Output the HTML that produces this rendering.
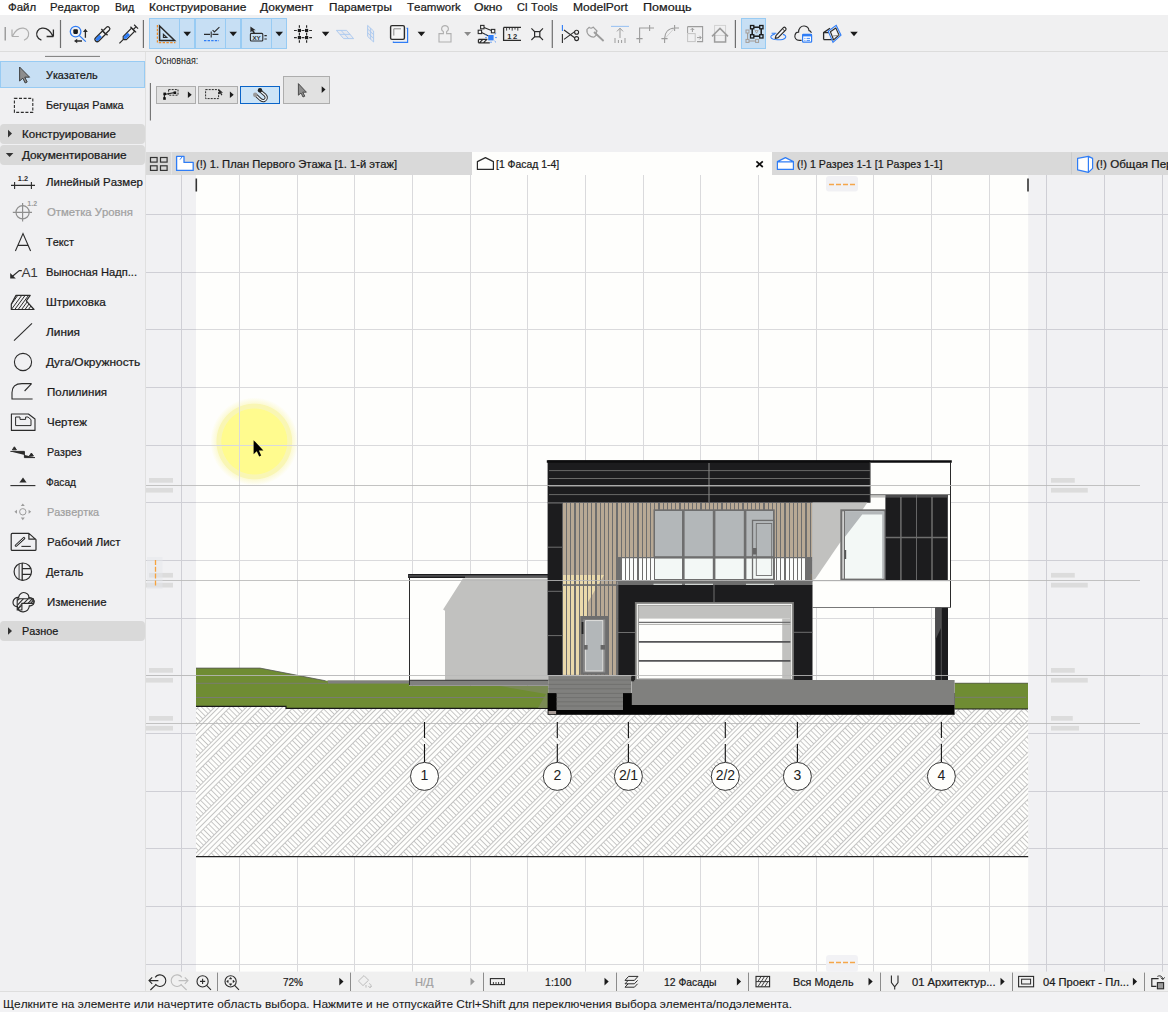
<!DOCTYPE html><html lang="ru"><head><meta charset="utf-8"><title>ARCHICAD</title><style>
html,body{margin:0;padding:0;}
body{width:1168px;height:1012px;position:relative;overflow:hidden;background:#f0f0f2;font-family:"Liberation Sans", "DejaVu Sans", sans-serif;}
.abs{position:absolute;}
.t{position:absolute;white-space:nowrap;line-height:1;font-kerning:none;transform-origin:0 0;-webkit-text-stroke:0.22px currentColor;}
#menubar{left:0;top:0;width:1168px;height:15px;background:#ffffff;}
#toolbar{left:0;top:15px;width:1168px;height:36px;background:#f0f0f1;border-bottom:1px solid #dcdcdc;}
#infobox{left:146px;top:52px;width:1022px;height:97px;background:#f0f0f2;}
#vdiv{left:145px;top:52px;width:1px;height:940px;background:#e0e0e0;}
#toolbox{left:0;top:52px;width:146px;height:942px;background:#f0f0f2;}
#tabbar{left:146px;top:152px;width:1022px;height:22.8px;background:#d9d9d9;}
#tabactive{left:471.6px;top:152px;width:300px;height:23px;background:#fefefc;}
#bottombar{left:146px;top:971.8px;width:1022px;height:20px;background:#f0f0f0;}
#statusbar{left:0;top:991px;width:1168px;height:21px;background:#f2f2f4;border-top:1px solid #dedede;box-sizing:border-box;}
.bluebtn{background:#c7dff4;border:1px solid #98cbf3;box-sizing:border-box;}
.hdr{left:0;width:145px;background:#d9d9d9;border-radius:4px;}
.ibtn{background:#e1e1e1;border:1px solid #adadad;box-sizing:border-box;}
</style></head><body>
<svg id="cv" width="1168" height="1012" viewBox="0 0 1168 1012" style="position:absolute;left:0;top:0">
<defs>
<clipPath id="cvclip"><rect x="146" y="174.7" width="1022" height="797.0999999999999"/></clipPath>
<pattern id="hatch" patternUnits="userSpaceOnUse" width="3.7" height="22.48" patternTransform="rotate(-45) translate(0 -0.53)"><path d="M0 0H3.7M0 3.81H3.7M0 7.63H3.7M0 11.44H3.7M1 11.44V22.48" stroke="#b0b0b0" stroke-width="0.75" fill="none" shape-rendering="crispEdges"/></pattern>
<radialGradient id="ycur" cx="0.5" cy="0.5" r="0.5"><stop offset="0" stop-color="#fffb8e"/><stop offset="0.74" stop-color="#fffb8e"/><stop offset="0.76" stop-color="#f9f6b4"/><stop offset="0.85" stop-color="#f9f6b4"/><stop offset="0.87" stop-color="#fcfad6"/><stop offset="1" stop-color="#fefefc"/></radialGradient>
</defs>
<g clip-path="url(#cvclip)">
<rect x="146" y="174.7" width="1022" height="797.0999999999999" fill="#fefefc"/>
<circle cx="254.3" cy="441.5" r="44" fill="url(#ycur)"/>
<path d="M181.5 174.7V971.8M239.5 174.7V971.8M297.5 174.7V971.8M354.5 174.7V971.8M412.5 174.7V971.8M470.5 174.7V971.8M527.5 174.7V971.8M585.5 174.7V971.8M643.5 174.7V971.8M700.5 174.7V971.8M758.5 174.7V971.8M816.5 174.7V971.8M873.5 174.7V971.8M931.5 174.7V971.8M989.5 174.7V971.8M1046.5 174.7V971.8M1104.5 174.7V971.8M1162.5 174.7V971.8M146 214.5H1168M146 272.5H1168M146 329.5H1168M146 387.5H1168M146 445.5H1168M146 502.5H1168M146 560.5H1168M146 618.5H1168M146 675.5H1168M146 733.5H1168M146 791.5H1168M146 848.5H1168M146 906.5H1168M146 964.5H1168" stroke="#dadadc" stroke-width="1" fill="none"/>
<rect x="146" y="174.7" width="50" height="797.0999999999999" fill="rgba(37,37,102,0.06)"/>
<rect x="1028.2" y="174.7" width="139.79999999999995" height="797.0999999999999" fill="rgba(37,37,102,0.06)"/>
<path d="M145.5 174.7V971.8" stroke="#d0d0d0" stroke-width="1"/>
<rect x="196" y="706" width="832.2" height="150.6" fill="#fefefc"/>
<rect x="196" y="706" width="832.2" height="150.6" fill="url(#hatch)"/>
<path d="M196 856.6H1028.2" stroke="#222" stroke-width="1.2"/>
<path d="M196 668.1H260L325.6 680.8H409V686H548.3V708.6H286V706.6H196Z" fill="#6f8c33"/>
<path d="M196 668.1H260L325.6 680.8" stroke="#555" stroke-width="0.8" fill="none"/>
<rect x="327.7" y="680.4" width="81.5" height="3.2" fill="#80807e"/>
<rect x="409" y="680.4" width="139.5" height="5.4" fill="#80807e"/>
<path d="M196 683.3H327M196 697.5H548" stroke="#7a7a78" stroke-width="0.9"/>
<path d="M196 706.4H286V708.4H548" stroke="#1a1a1a" stroke-width="1.2" fill="none"/>
<path d="M500 686H548.3V708L538 708L546 694Z" fill="#7d8a5c" opacity="0.8"/>
<rect x="954.6" y="683" width="73.4" height="26" fill="#6f8c33"/>
<path d="M954.6 697.3H1026" stroke="#7a7a78" stroke-width="0.9"/>
<path d="M954.6 683.2H1028" stroke="#555" stroke-width="0.7"/>
<path d="M954.6 709H1028" stroke="#1a1a1a" stroke-width="1.2"/>
<rect x="409" y="577" width="139.3" height="103.4" fill="#fefefc"/>
<path d="M462.9 578.4H548.3V680.2H445V610.8L443.1 609.6Z" fill="#c1c1bf"/>
<rect x="408.1" y="574" width="140" height="4" fill="#1c1c1e"/><rect x="409" y="575" width="139" height="1.8" fill="#4a4a4c"/>
<path d="M465 577.2H548" stroke="#777" stroke-width="1.2"/>
<path d="M409.5 577V685" stroke="#2b2b2b" stroke-width="1"/>
<path d="M409 680.3H548.3" stroke="#2a2a2a" stroke-width="1"/>
<rect x="812.5" y="462" width="137.8" height="145.7" fill="#fefefc"/>
<rect x="547.6" y="460.3" width="322.6" height="42.4" fill="#1c1c1e"/>
<path d="M549 470.6H870M549 478.5H870M549 494.6H870" stroke="#7d7d7b" stroke-width="0.8"/>
<path d="M549 486H870" stroke="#a9a9a7" stroke-width="0.9"/>
<path d="M709 463V502.6" stroke="#8a8a88" stroke-width="1"/>
<path d="M546.8 461.5H951.8" stroke="#0c0c0e" stroke-width="2.6"/>
<rect x="562" y="502.6" width="250.5" height="79" fill="#6e6e6e"/>
<rect x="562" y="581" width="55.5" height="94" fill="#6e6e6e"/>
<path d="M563 503.4H566V581H563ZM567 503.4H570V581H567ZM571 503.4H574V581H571ZM576 503.4H579V581H576ZM580 503.4H583V581H580ZM584 503.4H587V581H584ZM588 503.4H591V581H588ZM592 503.4H595V581H592ZM597 503.4H600V581H597ZM601 503.4H604V581H601ZM605 503.4H608V581H605ZM609 503.4H612V581H609ZM613 503.4H616V581H613ZM618 503.4H621V581H618ZM622 503.4H625V581H622ZM626 503.4H629V581H626ZM630 503.4H633V581H630ZM634 503.4H637V581H634ZM639 503.4H642V581H639ZM643 503.4H646V581H643ZM647 503.4H650V581H647ZM651 503.4H654V581H651ZM655 503.4H658V581H655ZM660 503.4H663V581H660ZM664 503.4H667V581H664ZM668 503.4H671V581H668ZM672 503.4H675V581H672ZM676 503.4H679V581H676ZM681 503.4H684V581H681ZM685 503.4H688V581H685ZM689 503.4H692V581H689ZM693 503.4H696V581H693ZM697 503.4H700V581H697ZM702 503.4H705V581H702ZM706 503.4H709V581H706ZM710 503.4H713V581H710ZM714 503.4H717V581H714ZM718 503.4H721V581H718ZM723 503.4H726V581H723ZM727 503.4H730V581H727ZM731 503.4H734V581H731ZM735 503.4H738V581H735ZM739 503.4H742V581H739ZM744 503.4H747V581H744ZM748 503.4H751V581H748ZM752 503.4H755V581H752ZM756 503.4H759V581H756ZM760 503.4H763V581H760ZM765 503.4H768V581H765ZM769 503.4H772V581H769ZM773 503.4H776V581H773ZM777 503.4H780V581H777ZM781 503.4H784V581H781ZM786 503.4H789V581H786ZM790 503.4H793V581H790ZM794 503.4H797V581H794ZM798 503.4H801V581H798ZM802 503.4H805V581H802ZM807 503.4H810V581H807ZM811 503.4H812V581H811Z" fill="#b8a995" shape-rendering="crispEdges"/>
<path d="M563 581H566V675H563ZM567 581H570V675H567ZM571 581H574V675H571ZM576 581H579V675H576ZM580 581H583V675H580ZM584 581H587V675H584ZM588 581H591V675H588ZM592 581H595V675H592ZM597 581H600V675H597ZM601 581H604V675H601ZM605 581H608V675H605ZM609 581H612V675H609ZM613 581H616V675H613Z" fill="#b8a995" shape-rendering="crispEdges"/>
<clipPath id="crm"><path d="M562 575H604L587.2 603.4V616H580.3V674.8H562Z"/></clipPath>
<path d="M563 575H566V675H563ZM567 575H570V675H567ZM571 575H574V675H571ZM576 575H579V675H576ZM580 575H583V675H580ZM584 575H587V675H584ZM588 575H591V675H588ZM592 575H595V675H592ZM597 575H600V675H597ZM601 575H604V675H601ZM605 575H606V675H605Z" fill="#ead9ab" shape-rendering="crispEdges" clip-path="url(#crm)"/>
<rect x="547.6" y="502.6" width="14.6" height="172.5" fill="#1c1c1e"/>
<path d="M548 547.2H562M548 591.3H562M548 635.6H562M548 503H562" stroke="#6e6e6e" stroke-width="1"/>
<rect x="653.5" y="509.3" width="121.2" height="71" fill="#6e6e6e"/>
<rect x="655" y="511" width="27" height="45.2" fill="#b3b7b9"/>
<rect x="655" y="558.4" width="27" height="20.6" fill="#f3f8f6"/>
<rect x="684.6" y="511" width="28.199999999999932" height="45.2" fill="#b3b7b9"/>
<rect x="684.6" y="558.4" width="28.199999999999932" height="20.6" fill="#f3f8f6"/>
<rect x="715.4" y="511" width="28.399999999999977" height="45.2" fill="#b3b7b9"/>
<rect x="715.4" y="558.4" width="28.399999999999977" height="20.6" fill="#f3f8f6"/>
<rect x="746.4" y="511" width="26.600000000000023" height="45.2" fill="#b3b7b9"/>
<rect x="746.4" y="558.4" width="26.600000000000023" height="20.6" fill="#f3f8f6"/>
<rect x="752.5" y="520.4" width="21.3" height="59" fill="none" stroke="#6e6e6e" stroke-width="1.3"/>
<rect x="756.3" y="523.5" width="15.4" height="52" fill="none" stroke="#6e6e6e" stroke-width="0.9"/>
<rect x="753" y="548" width="3.6" height="6.5" fill="#666"/>
<rect x="618.3" y="557.2" width="35.4" height="24" fill="#6e6e6e"/>
<rect x="774.6" y="557.2" width="37.2" height="24" fill="#6e6e6e"/>
<path d="M622 558H625V580.4H622ZM626 558H629V580.4H626ZM630 558H633V580.4H630ZM634 558H637V580.4H634ZM639 558H642V580.4H639ZM643 558H646V580.4H643ZM647 558H650V580.4H647ZM651 558H654V580.4H651Z" fill="#fbfcfb" shape-rendering="crispEdges"/>
<path d="M775 558H776V580.4H775ZM777 558H780V580.4H777ZM781 558H784V580.4H781ZM786 558H789V580.4H786ZM790 558H793V580.4H790ZM794 558H797V580.4H794ZM798 558H801V580.4H798ZM802 558H805V580.4H802Z" fill="#fbfcfb" shape-rendering="crispEdges"/>
<rect x="807.6" y="557" width="4.6" height="24" fill="#6e6e6e"/>
<rect x="617.6" y="557" width="3.6" height="24" fill="#6e6e6e"/>
<path d="M811.4 574V584" stroke="#e8a33d" stroke-width="0.8"/>
<path d="M618 557.6H812" stroke="#6e6e6e" stroke-width="1.4"/>
<path d="M618.6 557V582M811.2 557V582" stroke="#6e6e6e" stroke-width="1.3"/>
<rect x="617.5" y="580.2" width="195" height="5" fill="#6e6e6e"/>
<path d="M653.5 584.3H682M685 584.3H713M746 584.3H774" stroke="#e9eeec" stroke-width="1"/>
<rect x="562" y="584.2" width="55.5" height="1.7" fill="#6e6e6e"/>
<rect x="617.5" y="585" width="195" height="95.2" fill="#1c1c1e"/>
<path d="M714 585V602.6M617.5 632.5H635M793.6 632.3H812.5" stroke="#6e6e6e" stroke-width="1"/>
<path d="M617.9 585V675" stroke="#6e6e6e" stroke-width="1"/>
<rect x="634.9" y="602" width="159" height="78" fill="#7a7a78"/>
<rect x="636.7" y="603.8" width="155.4" height="75.4" fill="#f4f4f2"/>
<rect x="637.9" y="605" width="153.2" height="73.6" fill="#8a8a88"/>
<rect x="638.8" y="605.8" width="151.6" height="72.4" fill="#fefefc"/>
<rect x="638.8" y="605.8" width="151.6" height="12.8" fill="#c1c1bf"/>
<rect x="782.2" y="618.6" width="8.2" height="59.6" fill="#c1c1bf"/>
<path d="M638.8 622.4H790.4" stroke="#6e6e6e" stroke-width="1.1"/><path d="M638.8 624.4H790.4" stroke="#9a9a98" stroke-width="0.8"/>
<path d="M638.8 641.8H790.4M638.8 660.8H790.4" stroke="#555557" stroke-width="1.8"/>
<rect x="580.3" y="616" width="27.8" height="58.8" fill="#6e6e6e"/>
<rect x="583.2" y="619.4" width="22" height="53" fill="#8c8c8c"/>
<rect x="585.6" y="620.6" width="17.2" height="50.4" fill="#b3b7b9" stroke="#e4e4e2" stroke-width="0.9"/>
<rect x="581.6" y="622" width="1.8" height="12" fill="#222"/>
<rect x="584" y="645" width="3.6" height="4.6" fill="#666"/><rect x="600.6" y="645" width="4.4" height="4.6" fill="#666"/>
<path d="M812.5 502.6H867.4L815.2 579L812.5 580Z" fill="#c1c1bf"/>
<rect x="840.3" y="509.3" width="45.3" height="71" fill="#6e6e6e"/>
<rect x="845" y="511.3" width="38.4" height="67.3" fill="#f3f8f6"/>
<path d="M845 511.3H883.4V514.6H862.2L845 536.8Z" fill="#b3b7b9"/>
<rect x="882.2" y="511.3" width="2.2" height="67.3" fill="#b3b7b9"/>
<rect x="842.4" y="511.3" width="1.4" height="67.3" fill="#e8e8e6"/>
<rect x="844.4" y="550" width="1.8" height="9" fill="#555"/>
<rect x="885.4" y="495" width="62.4" height="85" fill="#1c1c1e"/>
<rect x="885.4" y="495" width="62.4" height="2.6" fill="#4c4c4e"/>
<rect x="870.4" y="495" width="15" height="2.6" fill="#c1c1bf"/>
<path d="M900.9 497V580M932 497V580M885.4 537.4H947.8" stroke="#6e6e6e" stroke-width="1.5"/>
<path d="M916.5 495V580" stroke="#6e6e6e" stroke-width="0.9"/>
<path d="M870 494.6H950M812.5 580.6H950.3M812.5 607.5H950.3" stroke="#555" stroke-width="0.8"/>
<path d="M950.5 462V607.6" stroke="#2a2a2a" stroke-width="1"/>
<path d="M870.2 462V502.6" stroke="#555" stroke-width="0.8"/>
<rect x="935.3" y="607.7" width="12.7" height="72.5" fill="#1c1c1e"/>
<path d="M935.3 607.7H941V628L935.3 640Z" fill="#4c4c4e"/>
<path d="M941.3 607.7V680" stroke="#777" stroke-width="0.6"/>
<rect x="547.6" y="693" width="407" height="21.8" fill="#050505"/>
<rect x="548.3" y="675.3" width="83.2" height="17.8" fill="#80807e"/>
<rect x="556.6" y="693" width="66.4" height="17" fill="#80807e"/>
<path d="M548.3 675.6H631M548.3 680H631M548.3 684.4H631M548.3 688.8H631M556.6 693.4H623M556.6 697.6H623M556.6 701.8H623M556.6 706H623" stroke="#6a6a68" stroke-width="0.7"/>
<path d="M548.3 675.6H631" stroke="#c5c5c3" stroke-width="0.9"/>
<rect x="631.8" y="680" width="322.8" height="25" fill="#80807e"/>
<rect x="631.2" y="676.8" width="3" height="4.5" fill="#222"/>
<rect x="548.5" y="711" width="7.6" height="3" fill="#a59a95"/>
<path d="M146 485.5H1140M146 580.5H1140M146 675.5H1140M146 723.5H1140" stroke="#b9b9b9" stroke-width="1" opacity="0.85"/>
<path d="M424.5 722V738M424.5 744V762" stroke="#111" stroke-width="1.1"/>
<circle cx="424.5" cy="776.4" r="14" fill="#fefefc" stroke="#222" stroke-width="0.9"/>
<text x="424.5" y="780.2" text-anchor="middle" font-family="'Liberation Sans', sans-serif" font-size="14" fill="#222">1</text>
<path d="M557.3 722V738M557.3 744V762" stroke="#111" stroke-width="1.1"/>
<circle cx="557.3" cy="776.4" r="14" fill="#fefefc" stroke="#222" stroke-width="0.9"/>
<text x="557.3" y="780.2" text-anchor="middle" font-family="'Liberation Sans', sans-serif" font-size="14" fill="#222">2</text>
<path d="M628.4 722V738M628.4 744V762" stroke="#111" stroke-width="1.1"/>
<circle cx="628.4" cy="776.4" r="14" fill="#fefefc" stroke="#222" stroke-width="0.9"/>
<text x="628.4" y="780.2" text-anchor="middle" font-family="'Liberation Sans', sans-serif" font-size="14" fill="#222" letter-spacing="-0.2">2/1</text>
<path d="M725.3 722V738M725.3 744V762" stroke="#111" stroke-width="1.1"/>
<circle cx="725.3" cy="776.4" r="14" fill="#fefefc" stroke="#222" stroke-width="0.9"/>
<text x="725.3" y="780.2" text-anchor="middle" font-family="'Liberation Sans', sans-serif" font-size="14" fill="#222" letter-spacing="-0.2">2/2</text>
<path d="M797.4 722V738M797.4 744V762" stroke="#111" stroke-width="1.1"/>
<circle cx="797.4" cy="776.4" r="14" fill="#fefefc" stroke="#222" stroke-width="0.9"/>
<text x="797.4" y="780.2" text-anchor="middle" font-family="'Liberation Sans', sans-serif" font-size="14" fill="#222">3</text>
<path d="M941.4 722V738M941.4 744V762" stroke="#111" stroke-width="1.1"/>
<circle cx="941.4" cy="776.4" r="14" fill="#fefefc" stroke="#222" stroke-width="0.9"/>
<text x="941.4" y="780.2" text-anchor="middle" font-family="'Liberation Sans', sans-serif" font-size="14" fill="#222">4</text>
<rect x="149" y="478.0" width="24" height="4.7" fill="#dcdcdc"/><rect x="146" y="487.9" width="27" height="4.7" fill="#dcdcdc"/>
<rect x="1051" y="478.0" width="23.8" height="4.7" fill="#dcdcdc"/><rect x="1051" y="487.9" width="36.8" height="4.7" fill="#dcdcdc"/>
<rect x="149" y="572.9" width="24" height="4.7" fill="#dcdcdc"/><rect x="146" y="582.8" width="27" height="4.7" fill="#dcdcdc"/>
<rect x="1051" y="572.9" width="23.8" height="4.7" fill="#dcdcdc"/><rect x="1051" y="582.8" width="36.8" height="4.7" fill="#dcdcdc"/>
<rect x="149" y="668.0" width="24" height="4.7" fill="#dcdcdc"/><rect x="146" y="677.9" width="27" height="4.7" fill="#dcdcdc"/>
<rect x="1051" y="668.0" width="23.8" height="4.7" fill="#dcdcdc"/><rect x="1051" y="677.9" width="36.8" height="4.7" fill="#dcdcdc"/>
<rect x="149" y="716.0" width="24" height="4.7" fill="#dcdcdc"/><rect x="146" y="725.9" width="27" height="4.7" fill="#dcdcdc"/>
<rect x="1051" y="716.0" width="21.8" height="4.7" fill="#dcdcdc"/><rect x="1051" y="725.9" width="28" height="4.7" fill="#dcdcdc"/>
<rect x="147" y="557" width="15.6" height="32" fill="#e4e6ea" opacity="0.45"/>
<path d="M155.5 560V586" stroke="#f6a23c" stroke-width="1.3" stroke-dasharray="5 1.8"/>
<rect x="826" y="176" width="32" height="15.6" rx="3" fill="#f1f1f4"/>
<path d="M829 184.5H856" stroke="#f5a64a" stroke-width="1.3" stroke-dasharray="5 2"/>
<rect x="826" y="955" width="32" height="17" rx="3" fill="#f1f1f4" opacity="0.9"/>
<path d="M829 962.5H856" stroke="#f5a64a" stroke-width="1.3" stroke-dasharray="5 2"/>
<path d="M196.3 178.5V191.5M1028 178.5V191.5" stroke="#333" stroke-width="1.6"/>
<path d="M253.6 440.2V454.2L256.8 451.2L259.2 456.4L261.2 455.4L258.9 450.4H263.4Z" fill="#000"/>
</g>
</svg>
<div class="abs" id="menubar"></div><div class="abs" id="toolbar"></div><div class="abs" id="infobox"></div>
<div class="abs" id="toolbox"></div><div class="abs" id="vdiv"></div><div class="abs" id="tabbar"></div><div class="abs" id="tabactive"></div>
<div class="abs" id="bottombar"></div><div class="abs" id="statusbar"></div>
<div class="abs bluebtn" style="left:149px;top:18px;width:30.8px;height:30.8px"></div>
<div class="abs bluebtn" style="left:179.2px;top:18px;width:16.0px;height:30.8px"></div>
<div class="abs bluebtn" style="left:194.6px;top:18px;width:31.3px;height:30.8px"></div>
<div class="abs bluebtn" style="left:225.3px;top:18px;width:16.0px;height:30.8px"></div>
<div class="abs bluebtn" style="left:240.7px;top:18px;width:31.1px;height:30.8px"></div>
<div class="abs bluebtn" style="left:271.2px;top:18px;width:16.0px;height:30.8px"></div>
<div class="abs bluebtn" style="left:741.2px;top:18px;width:24.6px;height:30.8px"></div>
<div class="abs ibtn" style="left:156.3px;top:86.3px;width:39.5px;height:17.8px"></div>
<div class="abs ibtn" style="left:198.2px;top:86.3px;width:39.5px;height:17.8px"></div>
<div class="abs" style="left:240.2px;top:86.3px;width:39.8px;height:17.8px;background:#cce4f7;border:1.4px solid #0a64c8;box-sizing:border-box"></div>
<div class="abs ibtn" style="left:282.5px;top:76.2px;width:47.3px;height:27.9px"></div>
<div class="abs bluebtn" style="left:0;top:61px;width:145px;height:26.8px"></div>
<div class="abs hdr" style="top:123.8px;height:19.8px"></div>
<div class="abs hdr" style="top:145.4px;height:19.3px"></div>
<div class="abs hdr" style="top:621.3px;height:19.5px"></div>
<svg id="ic" width="1168" height="1012" viewBox="0 0 1168 1012" style="position:absolute;left:0;top:0;pointer-events:none" fill="none" stroke-linecap="butt">
<path d="M5.2 27V40.5" stroke="#8a8a8a" stroke-width="1.2"/>
<path d="M12 36.5H18.8M12 36.5V29.5M12.4 36.2C15 31 19 27.6 23.4 28.2C27.6 28.8 29.6 32.6 28.4 36C27.6 38.2 26 39.6 24 40.2" stroke="#aeaeae" stroke-width="1.2"/>
<path d="M53.4 36.5H46.6M53.4 36.5V29.5M53 36.2C50.4 31 46.4 27.6 42 28.2C37.8 28.8 35.8 32.6 37 36C37.8 38.2 39.4 39.6 41.4 40.2" stroke="#2b2b2b" stroke-width="1.3"/>
<path d="M60.5 20V48M143.4 20V48M552.3 20V48M735.4 20V48" stroke="#6f6f6f" stroke-width="1.2"/>
<circle cx="75.6" cy="31.6" r="5.3" stroke="#2f7df6" stroke-width="1.3"/><path d="M79.4 35.6L85.8 41.6" stroke="#2f7df6" stroke-width="1.3"/>
<rect x="73.3" y="29.3" width="4.6" height="4.6" rx="1.1" fill="#1a1a1a"/>
<path d="M85.4 31.4V37.8M76.6 41H82" stroke="#2b2b2b" stroke-width="1.3"/><path d="M83 32L85.4 28.8L87.8 32ZM77.2 38.8V43.2L74 41Z" fill="#2b2b2b"/>
<g transform="translate(102.6 34) rotate(45)"><path d="M-2.2 -2V7.6C-2.2 10.6 2.2 10.6 2.2 7.6V-2Z" fill="#f4f4f4" stroke="#2b2b2b" stroke-width="1.3"/><path d="M-1.6 2.6H1.6V7.6C1.6 9.8 -1.6 9.8 -1.6 7.6Z" fill="#2f7df6"/><path d="M-4.4 -2.6H4.4" stroke="#2b2b2b" stroke-width="1.4"/><path d="M-2 -3V-7.4C-2 -10 2 -10 2 -7.4V-3" stroke="#2b2b2b" stroke-width="1.3" fill="#f4f4f4"/></g>
<g transform="translate(128.6 34.2) rotate(45)"><path d="M-2.2 -6.4H2.2V5.4L0.6 7H-0.6L-2.2 5.4Z" fill="#f4f4f4" stroke="#2b2b2b" stroke-width="1.2"/><path d="M-1.6 -0.4H1.6V5L0.4 6.4H-0.4L-1.6 5Z" fill="#2f7df6"/><path d="M0 7V13M-4 -6.6H4M0 -6.6V-10.4M-2.8 -10.6H2.8" stroke="#2b2b2b" stroke-width="1.2"/></g>
<path d="M159.6 26V40.4H174.6Z" stroke="#2b2b2b" stroke-width="1.5"/><path d="M163.4 34.2V37.4H166.8Z" stroke="#2b2b2b" stroke-width="1.1"/>
<path d="M157.4 25V42.6H175.4" stroke="#f08a24" stroke-width="1.2" stroke-dasharray="2.4 1.4"/>
<path d="M183.4 31.8H191.0L187.2 36.2Z" fill="#1a1a1a"/>
<path d="M204 34.4H210M212.4 34.4H218.4M211.2 31.6V37.4M212.6 30.2L214.4 32L219.4 27.2" stroke="#2b2b2b" stroke-width="1.1"/>
<path d="M204 40.6H219" stroke="#2f7df6" stroke-width="1.2" stroke-dasharray="2.4 1.2"/>
<path d="M229.4 31.8H237.0L233.2 36.2Z" fill="#1a1a1a"/>
<path d="M250.4 26.4V32.4L252 31L253.6 33.4L255 32.6L253.4 30.2H255.8Z" fill="#2b2b2b"/>
<rect x="250.4" y="33.4" width="12.4" height="7.6" rx="1" stroke="#2b2b2b" stroke-width="1.1"/>
<text x="256.6" y="39.6" text-anchor="middle" font-family="'Liberation Sans', sans-serif" font-size="6.2" font-weight="bold" fill="#2b2b2b">XY</text>
<path d="M264.4 35.6H266.8M264.4 39H266.8" stroke="#2b2b2b" stroke-width="1.1"/>
<path d="M275.4 31.8H283.0L279.2 36.2Z" fill="#1a1a1a"/>
<path d="M294 30.5H296.8M301.6 30.5H304.4M309.2 30.5H312" stroke="#2b2b2b" stroke-width="1.2"/>
<path d="M294 37.6H296.8M301.6 37.6H304.4M309.2 37.6H312" stroke="#2b2b2b" stroke-width="1.2"/>
<path d="M299.4 25.2V27.8M299.4 32.8V35.4M299.4 40.2V42.8" stroke="#2b2b2b" stroke-width="1.2"/>
<path d="M306.6 25.2V27.8M306.6 32.8V35.4M306.6 40.2V42.8" stroke="#2b2b2b" stroke-width="1.2"/>
<rect x="297.79999999999995" y="28.9" width="3.2" height="3.2" fill="#1a1a1a"/>
<rect x="297.79999999999995" y="36.0" width="3.2" height="3.2" fill="#1a1a1a"/>
<rect x="305.0" y="28.9" width="3.2" height="3.2" fill="#1a1a1a"/>
<rect x="305.0" y="36.0" width="3.2" height="3.2" fill="#1a1a1a"/>
<path d="M321.8 31.8H329.4L325.6 36.2Z" fill="#1a1a1a"/>
<path d="M336.4 30.4H346.6L353.6 38.6H343.6ZM341 30.4L348.6 38.6M340 34.4H350.2" stroke="#a9c7ef" stroke-width="0.9" fill="#e7e9ee"/>
<path d="M367.6 25.4L373.6 31V42L367.6 36.4ZM370.6 28.2V39.2M367.6 29L373.6 34.6M367.6 32.8L373.6 38.4" stroke="#a9c7ef" stroke-width="0.9" fill="#e7e9ee"/>
<path d="M393.4 41.6V42.4H407.6V28.4H406.6" stroke="#2f7df6" stroke-width="1.2"/>
<rect x="390.6" y="25.6" width="13.8" height="13.8" rx="1.4" stroke="#2b2b2b" stroke-width="1.4" fill="#f6f6f6"/><path d="M393.8 35.6V28.8H401" stroke="#8a8a8a" stroke-width="1"/>
<path d="M417.6 31.8H425.2L421.4 36.2Z" fill="#1a1a1a"/>
<path d="M443.4 33.6V31.6C440.2 29.6 441.6 25.6 445 25.6C448.4 25.6 449.8 29.6 446.6 31.6V33.6H451V42H439V33.6Z" stroke="#b0b0b0" stroke-width="1.1"/>
<path d="M464.1 31.9H471.1L467.6 36.1Z" fill="#8a8a8a"/>
<path d="M484 27.6L491.4 30.6M481.6 32.6L488.6 36" stroke="#2b2b2b" stroke-width="1.1"/>
<rect x="480.6" y="25.4" width="3.4" height="3.4" stroke="#2b2b2b" stroke-width="1.1" fill="#f4f4f4"/>
<rect x="478.2" y="30.2" width="3.4" height="3.4" stroke="#2b2b2b" stroke-width="1.1" fill="#f4f4f4"/>
<rect x="491.4" y="29.4" width="3.4" height="3.4" stroke="#2b2b2b" stroke-width="1.1" fill="#f4f4f4"/>
<rect x="488.2" y="35" width="5.4" height="5.4" fill="#2f7df6"/>
<path d="M494.8 34.4L496.2 33.2M495.2 37.6H496.8M494.6 41L495.8 42.2M491 41.6V43M486.6 35.6L485.4 34.6M485.2 37.6H486.8" stroke="#2f7df6" stroke-width="0.9"/>
<path d="M478.4 39.4H487.4M478.4 42.8H489.8M478.4 39.4V42.8M479.6 42.6L482.6 39.6M483.6 42.6L486.6 39.6" stroke="#2b2b2b" stroke-width="1.2"/>
<path d="M503.6 27.4H521M503.6 27.4V40.4H521" stroke="#2b2b2b" stroke-width="1.3"/><path d="M506.6 27.4V30.6M509.4 27.4V29.6M512.2 27.4V30.6M515 27.4V29.6M517.8 27.4V30.6" stroke="#2b2b2b" stroke-width="0.9"/>
<text x="513" y="38.8" text-anchor="middle" font-family="'Liberation Sans', sans-serif" font-size="7.6" font-weight="bold" fill="#2b2b2b" letter-spacing="1.6">12</text>
<path d="M531.4 28.4L535 32M543 28.4L539.4 32M531.4 40L535 36.4M543 40L539.4 36.4" stroke="#2b2b2b" stroke-width="1.1"/><rect x="534.6" y="31.6" width="5.2" height="5.2" stroke="#2b2b2b" stroke-width="1.2"/>
<path d="M562.4 25V31" stroke="#2f7df6" stroke-width="1.1"/><path d="M562.4 34V43" stroke="#2b2b2b" stroke-width="1.1"/>
<path d="M564 30L575 38M564 39.4L575 31.4" stroke="#2b2b2b" stroke-width="1.1"/><circle cx="576.6" cy="32.2" r="2" stroke="#2b2b2b" stroke-width="1.1"/><circle cx="576.6" cy="38.6" r="2" stroke="#2b2b2b" stroke-width="1.1"/>
<g transform="translate(-3.4 0)"><path d="M590.4 29.4L592.6 27.4C594 28.6 595.6 28.4 596.6 27.2L600.4 31C599 32.4 599.2 33.6 600.2 34.8L597.6 37C594 37.4 589.6 34.6 590.4 29.4Z" stroke="#9c9c9c" stroke-width="1.2"/><path d="M597.4 32L607 41" stroke="#9c9c9c" stroke-width="1.8"/></g>
<path d="M611 26.4H629" stroke="#9cc3f2" stroke-width="1.1"/><path d="M620 28.4V38M617 31.4L620 28.2L623 31.4M615 38V43M618.4 40V43M621.6 40V43M625 38V43" stroke="#9c9c9c" stroke-width="1"/>
<path d="M639.6 43V28H654M636.4 38.6H642.6M649.6 25V31" stroke="#9c9c9c" stroke-width="1.1"/>
<path d="M664.6 43V38.6C664.6 33 668 28.4 675 28M661.4 38.6H667.6M674.6 25V31M674.6 28H679" stroke="#9c9c9c" stroke-width="1.1"/><path d="M665.4 38L674 28.6" stroke="#c8c8c8" stroke-width="0.8"/>
<path d="M687.6 26.6H702.6V41.6H697" stroke="#9c9c9c" stroke-width="1.1"/><rect x="687.6" y="33.6" width="7.6" height="8" stroke="#c4c4c4" stroke-width="1"/><path d="M687.6 26.6V33M692.4 28.4V32M690.6 30L692.4 28.2L694.2 30M697 37.6H701M699.4 35.8L701.2 37.6L699.4 39.4" stroke="#9c9c9c" stroke-width="1"/>
<rect x="714.6" y="25.4" width="11" height="10" stroke="#cfcfcf" stroke-width="0.9"/><path d="M712 36.4L720 28.4L728 36.4M714.6 34.6V42H725.6V34.6" stroke="#9c9c9c" stroke-width="1.5"/>
<path d="M747.6 31.6V41H757" stroke="#a39c96" stroke-width="1.1"/><rect x="746" y="30" width="3" height="3" stroke="#a39c96" stroke-width="1" fill="#c7dff4"/><rect x="746" y="39.4" width="3" height="3" stroke="#a39c96" stroke-width="1" fill="#c7dff4"/><rect x="755.6" y="39.4" width="3" height="3" stroke="#a39c96" stroke-width="1" fill="#c7dff4"/>
<rect x="752.2" y="27.2" width="9" height="9" stroke="#1a1a1a" stroke-width="1.5"/>
<rect x="750.5" y="25.5" width="3.3" height="3.3" stroke="#1a1a1a" stroke-width="1.3" fill="#c7dff4"/>
<rect x="759.7" y="25.5" width="3.3" height="3.3" stroke="#1a1a1a" stroke-width="1.3" fill="#c7dff4"/>
<rect x="750.5" y="34.7" width="3.3" height="3.3" stroke="#1a1a1a" stroke-width="1.3" fill="#c7dff4"/>
<rect x="759.7" y="34.7" width="3.3" height="3.3" stroke="#1a1a1a" stroke-width="1.3" fill="#c7dff4"/>
<path d="M755 30.6H758.2L756.6 33.2Z" stroke="#a39c96" stroke-width="0.9"/>
<path d="M771.6 33.2H776.4M774.8 34.2C768.6 35.4 769.6 39.6 777.6 39.8C785.6 40 788.4 36 783 34.4" stroke="#2f7df6" stroke-width="1.1"/>
<path d="M775.2 38.4L776 35.6L783.4 27.6C784.6 26.4 786.8 28.4 785.8 29.8L778.2 37.6Z" stroke="#2b2b2b" stroke-width="1.2" fill="#f4f4f4" stroke-linejoin="round"/><path d="M782.4 28.8L784.8 31" stroke="#2b2b2b" stroke-width="0.9"/>
<path d="M801.6 40.4H799.4C796 40.4 794.2 37.8 795 35C795.6 33 797 32 798.6 32.2C798.4 28.4 801 25.6 804.4 26C807.2 26.4 808.8 28.4 809 30.6C810.2 30.8 811 31.6 811.4 32.8" stroke="#2b2b2b" stroke-width="1.1"/>
<rect x="802.6" y="34.4" width="9" height="7.8" rx="0.8" fill="#fff" stroke="#2f7df6" stroke-width="1.2"/><path d="M802.6 35.4H811.6" stroke="#2f7df6" stroke-width="2"/><path d="M804.4 38.4H805.4M806.6 38.4H810M804.4 40.4H805.4M806.6 40.4H810" stroke="#2f7df6" stroke-width="0.9"/>
<path d="M823.6 39.6V32.6L830 28.2M823.6 39.6H832.6M823.6 32.6H829" stroke="#2b2b2b" stroke-width="1.3" stroke-linejoin="round"/>
<path d="M828.2 31.2L836.2 25.4L841 35.2L833 42.4Z" stroke="#2f7df6" stroke-width="1.1"/><path d="M830.4 31.8L835.8 28L839 35L833.6 39.8Z" stroke="#2b2b2b" stroke-width="1.1" fill="#f4f4f4" stroke-linejoin="round"/><path d="M833 36L838.8 35.2" stroke="#8a8a8a" stroke-width="0.9"/>
<path d="M850.2 31.8H857.8L854.0 36.2Z" fill="#1a1a1a"/>
<path d="M150.4 83V120.4" stroke="#6f6f6f" stroke-width="1.1"/>
<rect x="168.6" y="89.6" width="9.4" height="5.6" stroke="#2b2b2b" stroke-width="1" stroke-dasharray="2 1.1"/><path d="M164.4 98.6V94.4L174.4 92.6" stroke="#2b2b2b" stroke-width="1.2"/>
<rect x="163.2" y="97.2" width="2.6" height="2.6" fill="#111"/>
<rect x="163.4" y="92.6" width="2.6" height="2.6" fill="#111"/>
<rect x="173.6" y="91.4" width="2.6" height="2.6" fill="#111"/>
<path d="M187.9 91.5V98.1L191.7 94.8Z" fill="#1a1a1a"/>
<rect x="205.6" y="89.6" width="13" height="9" stroke="#2b2b2b" stroke-width="1" stroke-dasharray="2 1.1"/><path d="M218.8 89V94.6L220.2 93.4L221.4 95.4L222.4 94.8L221.2 92.8H223Z" fill="#2b2b2b"/>
<path d="M229.9 91.5V98.1L233.7 94.8Z" fill="#1a1a1a"/>
<path d="M259.6 90.4L265 95C267 96.8 266.4 99.6 264.4 100.4C262.8 101 261.4 100.4 260.4 99.4L255.4 94.8" stroke="#2b2b2b" stroke-width="3.2"/><path d="M259.6 90.4L265 95C267 96.8 266.4 99.6 264.4 100.4C262.8 101 261.4 100.4 260.4 99.4L255.4 94.8" stroke="#eef4fa" stroke-width="1.3"/>
<circle cx="260" cy="90.2" r="2.2" fill="#222"/><circle cx="255.2" cy="94.8" r="2.2" fill="#9a9a9a"/>
<path d="M298.4 83.6V95.2L301 93L303 97L304.8 96.2L302.8 92.2H306.4Z" fill="#8d8d8d" stroke="#333" stroke-width="0.8"/>
<path d="M321.7 86.3V92.9L325.5 89.6Z" fill="#1a1a1a"/>
<path d="M45 56.4H100" stroke="#7a7a7a" stroke-width="1"/>
<path d="M19.6 67V81L22.8 78.2L25.2 83L27.2 82L24.8 77.2H29.6Z" fill="#8d8d8d" stroke="#333" stroke-width="0.9"/>
<rect x="14.4" y="98.4" width="18.4" height="14" stroke="#2b2b2b" stroke-width="1.1" stroke-dasharray="3 1.6"/>
<path d="M8.0 129.8V137.4L12.0 133.6Z" fill="#333"/>
<path d="M5.8 153.0H13.4L9.6 157.0Z" fill="#333"/>
<path d="M8.0 627.2V634.8L12.0 631.0Z" fill="#333"/>
<path d="M11 185.4H35M14.6 182V189M31.4 182V189" stroke="#2b2b2b" stroke-width="1.1"/><text x="23" y="181" text-anchor="middle" font-family="'Liberation Sans', sans-serif" font-size="7.4" font-weight="bold" fill="#2b2b2b">1.2</text>
<circle cx="22.6" cy="212.3" r="6.6" stroke="#8f8f8f" stroke-width="1.2"/><path d="M12.8 212.3H32M22.6 203V221.6" stroke="#8f8f8f" stroke-width="1.2"/><text x="32.2" y="206" text-anchor="middle" font-family="'Liberation Sans', sans-serif" font-size="7" font-weight="bold" fill="#9a9a9a">1.2</text>
<path d="M15.4 251L23 233.6L30.6 251M18 245.4H28" stroke="#2b2b2b" stroke-width="1.1"/>
<path d="M11.6 277L19.3 270.6H21.8" stroke="#2b2b2b" stroke-width="1.2"/><path d="M10.2 273V278.6H15.8Z" fill="#2b2b2b"/><text x="29.6" y="276.6" text-anchor="middle" font-family="'Liberation Sans', sans-serif" font-size="13.6" fill="#3a3a3a" letter-spacing="-0.3">A1</text>
<clipPath id="hcl"><path d="M11.3 309.5V304L16 295.4H30.2L26.3 300.8L34 309.5Z"/></clipPath>
<g clip-path="url(#hcl)"><path d="M8 309L18 295M11 310L22 295M14.4 310L25.4 295M17.8 310L28.8 295M21.2 310L30 298M24.6 310L29 304M28 310L31 306" stroke="#2b2b2b" stroke-width="1"/></g>
<path d="M11.3 309.5V304L16 295.4H30.2L26.3 300.8L34 309.5Z" stroke="#2b2b2b" stroke-width="1.2" stroke-linejoin="round"/>
<path d="M14 340.6L32 323.4" stroke="#2b2b2b" stroke-width="1.1"/>
<circle cx="23" cy="362" r="8.6" stroke="#2b2b2b" stroke-width="1.1"/>
<path d="M31.6 383.6H22C15 383.6 12 387 12 392.6V399H32.6M31.6 383.6L24.6 391" stroke="#2b2b2b" stroke-width="1.1"/>
<path d="M11.4 414H28.4L35 419V430.4H11.4Z" stroke="#2b2b2b" stroke-width="1.1" stroke-linejoin="round"/><path d="M15.6 425.6V417H20V419.4H25.6V417H28L31 419.6V425.6Z" stroke="#2b2b2b" stroke-width="1"/>
<path d="M10.4 451.4H24.4V457.6H35M12.4 449.8L14.4 446.8L16.4 449.8ZM29.4 456L31.4 453L33.4 456Z" stroke="#2b2b2b" stroke-width="1" fill="#2b2b2b"/>
<path d="M10.4 485.6H35.4" stroke="#2b2b2b" stroke-width="1.1"/><path d="M19.4 482.4L23 477.4L26.6 482.4Z" fill="#2b2b2b"/>
<circle cx="22.8" cy="511.8" r="3.2" stroke="#9c9c9c" stroke-width="1"/><path d="M20.8 506L22.8 503.4L24.8 506ZM20.8 517.6L22.8 520.2L24.8 517.6ZM17 509.8L14.4 511.8L17 513.8ZM28.6 509.8L31.2 511.8L28.6 513.8Z" fill="#9c9c9c"/>
<path d="M12.2 533.4H28.9L36 539.6V549.4Q36 550.4 35 550.4H12.2Q11.2 550.4 11.2 549.4V534.4Q11.2 533.4 12.2 533.4ZM28.9 533.4V539.2H36" stroke="#2b2b2b" stroke-width="1.2" stroke-linejoin="round"/>
<path d="M16 545.6L24 538.2" stroke="#2b2b2b" stroke-width="2.6" stroke-linecap="round"/><path d="M16 545.6L24 538.2" stroke="#f0f0f2" stroke-width="0.9" stroke-linecap="round"/><path d="M21.4 546.4H30.8" stroke="#2b2b2b" stroke-width="1.1"/>
<circle cx="22.8" cy="571.7" r="8.7" stroke="#2b2b2b" stroke-width="1.2"/><path d="M19.1 563.8V579.6" stroke="#2b2b2b" stroke-width="0.9"/><path d="M22.2 563V580.4M22.2 568.7H31M22.2 574.3H31" stroke="#2b2b2b" stroke-width="1.3"/>
<path d="M18.6 597.4C19 593.4 23 591.6 25.8 593C28.4 594.2 29 596.6 28.8 597.8C32.4 597.2 34.8 600 34 602.8C33.4 605.2 31 606.2 29.4 605.8C29 609 26.6 611.6 23.4 611.8C20.4 612 18 610 17.4 606.6C14.6 606.8 12.8 604.8 13 602C13.2 599 16 597 18.6 597.4Z" stroke="#2b2b2b" stroke-width="1.2"/>
<clipPath id="ccl"><path d="M17.2 598.7H33.2V603.4H21.9V610H17.2Z"/></clipPath>
<g clip-path="url(#ccl)"><path d="M14 604L21 597M17 605.6L25 597M17 610L30 597M20 612L34 597M30 604L36 597" stroke="#2b2b2b" stroke-width="1.1"/></g>
<path d="M17.2 598.7H33.2V603.4H21.9V610H17.2Z" stroke="#2b2b2b" stroke-width="1.1"/><path d="M21.9 603.4L17.4 609" stroke="#2b2b2b" stroke-width="0.9"/>
<rect x="150.5" y="157.5" width="6.6" height="4.6" stroke="#333" stroke-width="1.2"/>
<rect x="160.5" y="157.5" width="6.6" height="4.6" stroke="#333" stroke-width="1.2"/>
<rect x="150.5" y="165.8" width="6.6" height="4.6" stroke="#333" stroke-width="1.2"/>
<rect x="160.5" y="165.8" width="6.6" height="4.6" stroke="#333" stroke-width="1.2"/>
<path d="M171.5 152.4V174.4" stroke="#e6e6e6" stroke-width="1"/><path d="M1071.5 152.4V174.4" stroke="#cbcbcb" stroke-width="1"/>
<path d="M176.6 170.4V156.4H184V162.4H193.2V170.4Z" stroke="#2f7df6" stroke-width="1.3" fill="#ffffff" stroke-linejoin="round"/><path d="M180 159.6L182 157" stroke="#2f7df6" stroke-width="1"/>
<path d="M477.4 169.4V161.6L485.4 157.6L493.4 161.6V169.4Z" stroke="#2b2b2b" stroke-width="1.2" stroke-linejoin="round"/>
<path d="M756.4 161.4L762.8 167M762.8 161.4L756.4 167" stroke="#111" stroke-width="1.7"/>
<path d="M777.4 169.4V161.6L785.4 157.6L793.4 161.6V169.4ZM777.4 161.8H793.4" stroke="#2f7df6" stroke-width="1.2" fill="#fdfdfd" stroke-linejoin="round"/>
<path d="M1077.6 158.3L1088.4 156.4V172.4L1077.6 169.8ZM1088.4 156.4L1092.6 158.4V168.4L1088.4 172.4" stroke="#2f7df6" stroke-width="1.2" fill="#fdfdfd" stroke-linejoin="round"/>
<path d="M217.5 972.6V991M350.5 972.6V991M483.5 972.6V991M616.5 972.6V991M748.5 972.6V991M880.5 972.6V991M1012.5 972.6V991M1144.5 972.6V991" stroke="#8c8c8c" stroke-width="1"/>
<path d="M155.2 977.4A5.8 5.8 0 1 1 155.4 984.2M156 984.6L150.4 990" stroke="#2b2b2b" stroke-width="1.1"/><path d="M149 980.6H158.4M152.2 977.4L149 980.6L152.2 983.8" stroke="#2b2b2b" stroke-width="1.1"/>
<path d="M181.8 977.4A5.8 5.8 0 1 0 181.6 984.2M181 984.6L186.6 990" stroke="#bdbdbd" stroke-width="1.1"/><path d="M188 980.6H178.6M184.8 977.4L188 980.6L184.8 983.8" stroke="#bdbdbd" stroke-width="1.1"/>
<circle cx="202.6" cy="981.4" r="5.6" stroke="#2b2b2b" stroke-width="1.1"/><path d="M206.6 985.4L211 989.8M200 981.4H205.2M202.6 978.8V984" stroke="#2b2b2b" stroke-width="1.1"/>
<circle cx="230.6" cy="981.4" r="5.6" stroke="#2b2b2b" stroke-width="1.1"/><path d="M234.6 985.4L239 989.8" stroke="#2b2b2b" stroke-width="1.1"/><path d="M229.4 979L230.6 977.4L231.8 979ZM229.4 983.8L230.6 985.4L231.8 983.8ZM228.2 980.2L226.6 981.4L228.2 982.6ZM233 980.2L234.6 981.4L233 982.6Z" fill="#2b2b2b" stroke="#2b2b2b" stroke-width="0.6"/>
<path d="M339.3 977.8V985.4L343.5 981.6Z" fill="#1a1a1a"/>
<path d="M358.4 981L364 975.6L368.6 980.2L363 985.6ZM366 985V987.6M369 983.6C371.4 984 371.6 986.4 370 987.6M368.4 986L370 987.8L371.6 986" stroke="#bdbdbd" stroke-width="1"/>
<path d="M470.5 977.8V985.4L474.7 981.6Z" fill="#9a9a9a"/>
<rect x="490.4" y="978.6" width="14" height="6" stroke="#2b2b2b" stroke-width="1.1"/><path d="M493.4 984.4V982M496 984.4V982M498.6 984.4V982M501.4 984.4V982" stroke="#2b2b2b" stroke-width="0.9"/>
<path d="M604.5 977.8V985.4L608.7 981.6Z" fill="#1a1a1a"/>
<path d="M625 980.4L628.6 976.4H638L634.4 980.4ZM625 983.8L628 980.6M625 987.2L628 984M625 983.8H634.4L637.6 980.4M625 987.2H634.4L637.6 983.8" stroke="#2b2b2b" stroke-width="1" stroke-linejoin="round"/>
<path d="M736.9 977.8V985.4L741.1 981.6Z" fill="#1a1a1a"/>
<rect x="756" y="976.4" width="13.6" height="10.4" stroke="#2b2b2b" stroke-width="1.1"/><path d="M756 981.6H769.6M758 981.4L761 976.6M761.4 981.4L764.4 976.6M764.8 981.4L767.8 976.6M758 986.6L761 981.8M761.4 986.6L764.4 981.8M764.8 986.6L767.8 981.8" stroke="#2b2b2b" stroke-width="0.9"/>
<path d="M868.5 977.8V985.4L872.7 981.6Z" fill="#1a1a1a"/>
<path d="M891.4 975.4V982.6L894.7 986.8L898 982.6V975.4M894.7 986.8V989.6" stroke="#2b2b2b" stroke-width="1.1"/>
<path d="M1000.5 977.8V985.4L1004.7 981.6Z" fill="#1a1a1a"/>
<rect x="1018.6" y="976.4" width="15" height="10.4" stroke="#2b2b2b" stroke-width="1.1"/><rect x="1021.6" y="979.2" width="9" height="4.8" stroke="#2b2b2b" stroke-width="1"/>
<path d="M1132.9 977.8V985.4L1137.1 981.6Z" fill="#1a1a1a"/>
<path d="M1158.6 978.6H1151.8V986.4H1156.4" stroke="#2b2b2b" stroke-width="1.2"/><rect x="1157.4" y="982.6" width="6.2" height="6.2" fill="#9c9c9c" stroke="#2b2b2b" stroke-width="1.1"/><path d="M1157.4 976.4C1160 975 1162.6 976.4 1162.8 979.2M1160.8 977.6L1162.8 979.6L1164.6 977.4" stroke="#2b2b2b" stroke-width="1"/>
</svg>
<div class="t" id="t0" style="left:7.5px;top:1.77px;font-size:10.9px;color:#1a1a1a;transform:scaleX(1.0492);">Файл</div>
<div class="t" id="t1" style="left:50.1px;top:1.77px;font-size:10.9px;color:#1a1a1a;transform:scaleX(1.0418);">Редактор</div>
<div class="t" id="t2" style="left:114.5px;top:1.77px;font-size:10.9px;color:#1a1a1a;transform:scaleX(0.9694);">Вид</div>
<div class="t" id="t3" style="left:148.9px;top:1.77px;font-size:10.9px;color:#1a1a1a;transform:scaleX(1.0989);">Конструирование</div>
<div class="t" id="t4" style="left:260.2px;top:1.77px;font-size:10.9px;color:#1a1a1a;transform:scaleX(1.1078);">Документ</div>
<div class="t" id="t5" style="left:328.8px;top:1.77px;font-size:10.9px;color:#1a1a1a;transform:scaleX(1.0749);">Параметры</div>
<div class="t" id="t6" style="left:406.5px;top:1.77px;font-size:10.9px;color:#1a1a1a;transform:scaleX(1.0581);">Teamwork</div>
<div class="t" id="t7" style="left:474.4px;top:1.77px;font-size:10.9px;color:#1a1a1a;transform:scaleX(1.1220);">Окно</div>
<div class="t" id="t8" style="left:517.4px;top:1.77px;font-size:10.9px;color:#1a1a1a;transform:scaleX(1.0009);">CI Tools</div>
<div class="t" id="t9" style="left:572.6px;top:1.77px;font-size:10.9px;color:#1a1a1a;transform:scaleX(1.1059);">ModelPort</div>
<div class="t" id="t10" style="left:642.6px;top:1.77px;font-size:10.9px;color:#1a1a1a;transform:scaleX(1.1550);">Помощь</div>
<div class="t" id="t11" style="left:155.1px;top:55.77px;font-size:10.2px;color:#1a1a1a;transform:scaleX(0.8749);-webkit-text-stroke:0;">Основная:</div>
<div class="t" id="t12" style="left:46px;top:70.07px;font-size:10.9px;color:#1a1a1a;transform:scaleX(0.9986);">Указатель</div>
<div class="t" id="t13" style="left:46px;top:100.07px;font-size:10.9px;color:#1a1a1a;transform:scaleX(0.9923);">Бегущая Рамка</div>
<div class="t" id="t14" style="left:22.2px;top:129.07px;font-size:10.9px;color:#1a1a1a;transform:scaleX(1.0616);">Конструирование</div>
<div class="t" id="t15" style="left:22.2px;top:150.07px;font-size:10.9px;color:#1a1a1a;transform:scaleX(1.0862);">Документирование</div>
<div class="t" id="t16" style="left:46px;top:177.07px;font-size:10.9px;color:#1a1a1a;transform:scaleX(1.0502);">Линейный Размер</div>
<div class="t" id="t17" style="left:46.5px;top:207.07px;font-size:10.9px;color:#a0a0a0;transform:scaleX(1.0414);">Отметка Уровня</div>
<div class="t" id="t18" style="left:46px;top:237.07px;font-size:10.9px;color:#1a1a1a;transform:scaleX(1.0028);">Текст</div>
<div class="t" id="t19" style="left:46px;top:267.07px;font-size:10.9px;color:#1a1a1a;transform:scaleX(1.0241);">Выносная Надп...</div>
<div class="t" id="t20" style="left:46px;top:297.07px;font-size:10.9px;color:#1a1a1a;transform:scaleX(1.0827);">Штриховка</div>
<div class="t" id="t21" style="left:46px;top:327.07px;font-size:10.9px;color:#1a1a1a;transform:scaleX(1.0885);">Линия</div>
<div class="t" id="t22" style="left:46px;top:357.07px;font-size:10.9px;color:#1a1a1a;transform:scaleX(1.0955);">Дуга/Окружность</div>
<div class="t" id="t23" style="left:46.5px;top:387.07px;font-size:10.9px;color:#1a1a1a;transform:scaleX(1.0587);">Полилиния</div>
<div class="t" id="t24" style="left:46.5px;top:417.07px;font-size:10.9px;color:#1a1a1a;transform:scaleX(1.0583);">Чертеж</div>
<div class="t" id="t25" style="left:46.5px;top:447.07px;font-size:10.9px;color:#1a1a1a;transform:scaleX(0.9796);">Разрез</div>
<div class="t" id="t26" style="left:46px;top:477.07px;font-size:10.9px;color:#1a1a1a;transform:scaleX(0.9316);">Фасад</div>
<div class="t" id="t27" style="left:46.5px;top:507.07px;font-size:10.9px;color:#a0a0a0;transform:scaleX(1.0013);">Развертка</div>
<div class="t" id="t28" style="left:46.5px;top:537.07px;font-size:10.9px;color:#1a1a1a;transform:scaleX(1.0477);">Рабочий Лист</div>
<div class="t" id="t29" style="left:46px;top:567.07px;font-size:10.9px;color:#1a1a1a;transform:scaleX(1.0215);">Деталь</div>
<div class="t" id="t30" style="left:46.5px;top:597.07px;font-size:10.9px;color:#1a1a1a;transform:scaleX(1.0514);">Изменение</div>
<div class="t" id="t31" style="left:22.4px;top:626.07px;font-size:10.9px;color:#1a1a1a;transform:scaleX(0.9985);">Разное</div>
<div class="t" id="t32" style="left:196px;top:158.87px;font-size:10.9px;color:#1a1a1a;transform:scaleX(1.0275);">(!) 1. План Первого Этажа [1. 1-й этаж]</div>
<div class="t" id="t33" style="left:496.4px;top:158.87px;font-size:10.9px;color:#1a1a1a;transform:scaleX(0.9562);">[1 Фасад 1-4]</div>
<div class="t" id="t34" style="left:796.6px;top:158.87px;font-size:10.9px;color:#1a1a1a;transform:scaleX(0.9762);">(!) 1 Разрез 1-1 [1 Разрез 1-1]</div>
<div class="t" id="t35" style="left:1096.4px;top:158.87px;font-size:10.9px;color:#1a1a1a;transform:scaleX(1.0651);">(!) Общая Перспектива</div>
<div class="t" id="t36" style="left:282.6px;top:976.77px;font-size:10.9px;color:#1a1a1a;transform:scaleX(0.9169);">72%</div>
<div class="t" id="t37" style="left:415.4px;top:976.77px;font-size:10.9px;color:#a0a0a0;transform:scaleX(1.0174);">Н/Д</div>
<div class="t" id="t38" style="left:545px;top:976.77px;font-size:10.9px;color:#1a1a1a;transform:scaleX(0.9719);">1:100</div>
<div class="t" id="t39" style="left:664px;top:976.77px;font-size:10.9px;color:#1a1a1a;transform:scaleX(0.9516);">12 Фасады</div>
<div class="t" id="t40" style="left:792.5px;top:976.77px;font-size:10.9px;color:#1a1a1a;transform:scaleX(0.9885);">Вся Модель</div>
<div class="t" id="t41" style="left:911.5px;top:976.77px;font-size:10.9px;color:#1a1a1a;transform:scaleX(1.0261);">01 Архитектур...</div>
<div class="t" id="t42" style="left:1043px;top:976.77px;font-size:10.9px;color:#1a1a1a;transform:scaleX(1.0259);">04 Проект - Пл...</div>
<div class="t" id="t43" style="left:3px;top:999.07px;font-size:10.9px;color:#1a1a1a;transform:scaleX(1.0883);-webkit-text-stroke:0.08px currentColor;">Щелкните на элементе или начертите область выбора. Нажмите и не отпускайте Ctrl+Shift для переключения выбора элемента/подэлемента.</div>
</body></html>
